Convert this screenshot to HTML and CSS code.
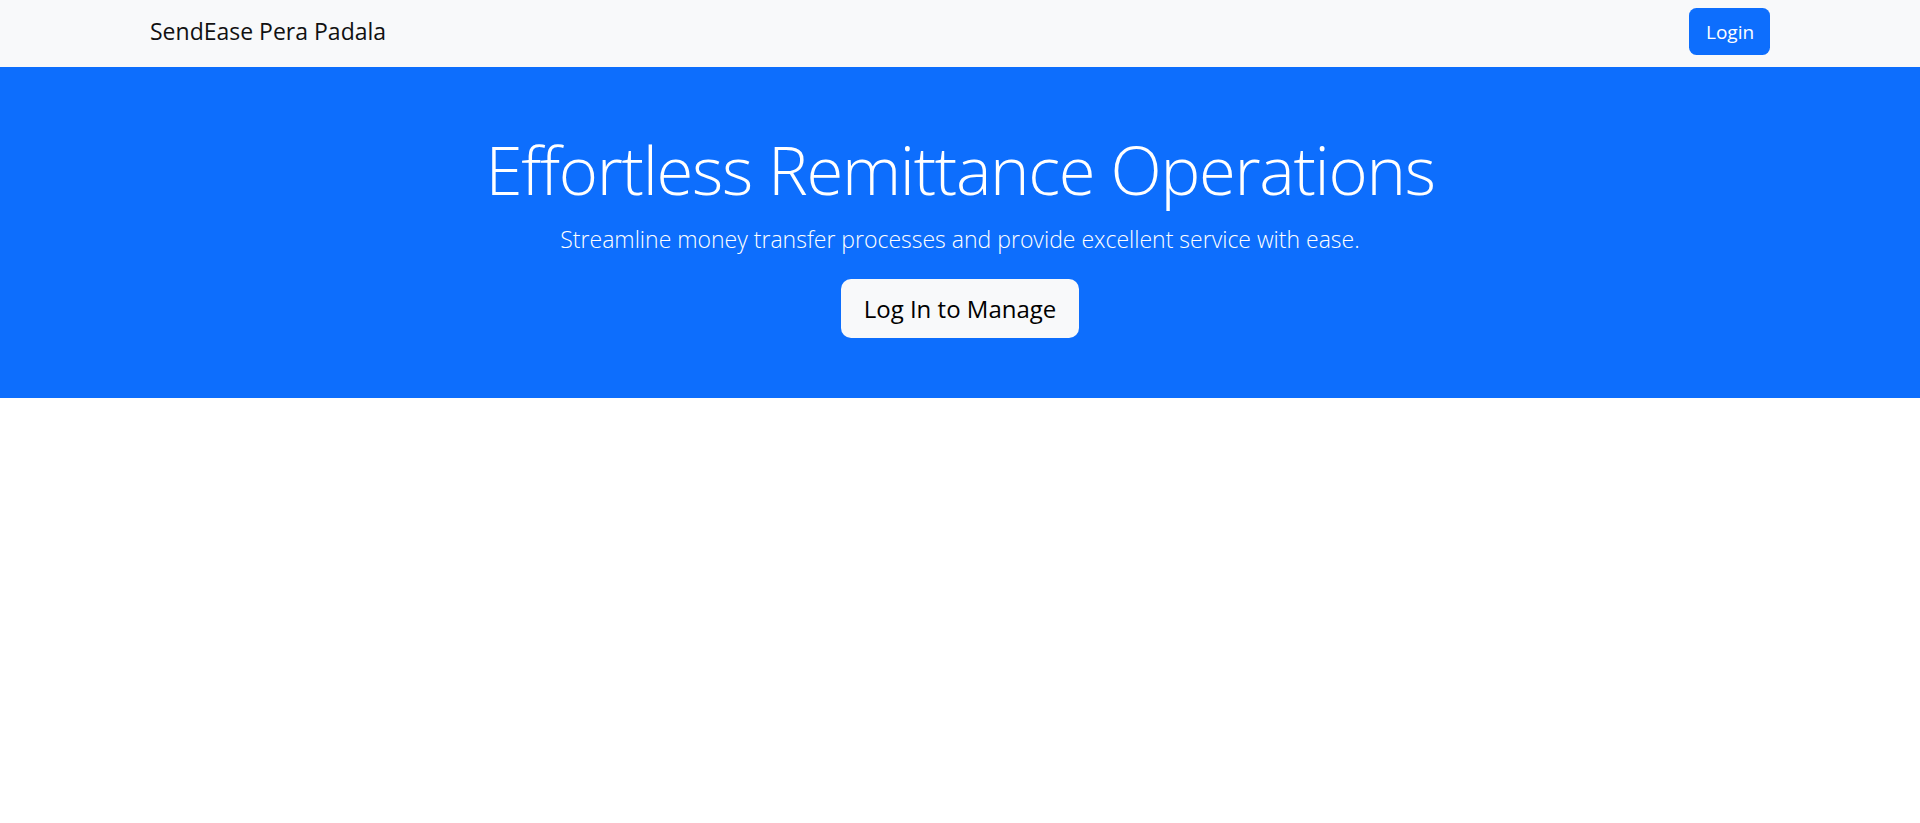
FILE: index.html
```html
<!DOCTYPE html>
<html lang="en">
<head>
<meta charset="utf-8">
<title>SendEase Pera Padala</title>
<link rel="stylesheet" href="styles.css">
</head>
<body>
<nav class="navbar">
  <div class="container nav-inner">
    <a class="brand" href="#">SendEase Pera Padala</a>
    <a class="btn btn-primary" href="#">Login</a>
  </div>
</nav>
<section class="hero">
  <div class="container hero-inner">
    <h1 class="hero-title">Effortless Remittance Operations</h1>
    <p class="lead">Streamline money transfer processes and provide excellent service with ease.</p>
    <a class="btn btn-light btn-lg" href="#">Log In to Manage</a>
  </div>
</section>
</body>
</html>
```
FILE: styles.css
```css
* { box-sizing: border-box; }
html, body { margin: 0; padding: 0; }
body {
  font-family: "Open Sans", "Noto Sans", sans-serif;
  background: #fff;
  color: #212529;
  font-size: 20px;
  line-height: 1.5;
}
.container {
  width: 1650px;
  margin: 0 auto;
  padding: 0 15px;
}
.navbar {
  background: #f8f9fa;
  height: 67px;
  padding: 8px 0 12px;
}
.nav-inner {
  display: flex;
  align-items: center;
  justify-content: space-between;
  height: 100%;
}
.brand {
  font-size: 23px;
  line-height: 1.5;
  color: #111;
  text-decoration: none;
}
.btn {
  display: inline-block;
  text-decoration: none;
  border: 1px solid transparent;
}
.btn-primary {
  background: #0d6efd;
  color: #fff;
  font-size: 19px;
  line-height: 28px;
  padding: 8.5px 16px;
  width: 81px;
  text-align: center;
  border-radius: 7.5px;
}
.hero {
  background: #0d6efd;
  color: #fff;
  padding: 60px 0;
}
.hero-inner {
  display: flex;
  flex-direction: column;
  align-items: center;
  text-align: center;
}
.hero-title {
  margin: 0 0 10px;
  font-weight: 300;
  font-size: 67px;
  line-height: 84px;
  letter-spacing: -1.3px;
}
.lead {
  margin: 0 0 20px;
  font-size: 23px;
  font-weight: 300;
  line-height: 37.5px;
}
.btn-light {
  background: #f8f9fa;
  color: #000;
}
.btn-lg {
  font-size: 24px;
  line-height: 37.5px;
  padding: 10px 16px;
  width: 238px;
  text-align: center;
  border-radius: 10px;
  white-space: nowrap;
}
```
